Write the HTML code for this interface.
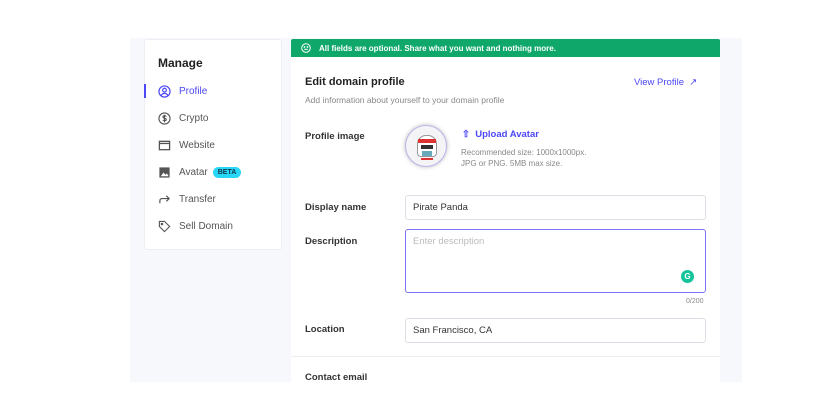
<!DOCTYPE html>
<html><head><style>
*{margin:0;padding:0;box-sizing:border-box}
body{width:827px;height:420px;background:#fff;font-family:"Liberation Sans",sans-serif;position:relative;overflow:hidden;color:#222}
.bg{position:absolute;left:130px;top:38px;width:612px;height:344px;background:#f7f8fc}
.side{position:absolute;left:144px;top:39px;width:138px;height:211px;background:#fff;border:1px solid #eceef3;border-radius:3px}
.side h3{position:absolute;left:13px;top:15px;font-size:12px;font-weight:bold;color:#222}
.item{position:absolute;left:13px;font-size:10px;color:#555;display:flex;align-items:center}
.item svg{width:13px;height:13px;margin-right:8px}
.act{color:#4c47f7}
.bar{position:absolute;left:-1px;top:44px;width:2px;height:14px;background:#4c47f7}
.beta{background:#28d7f5;color:#12374a;font-size:7px;font-weight:bold;border-radius:7px;padding:2px 5px;margin-left:5px}
.banner{position:absolute;left:291px;top:39px;width:429px;height:18px;background:#0fa86a;color:#fff;font-size:8px;font-weight:bold;display:flex;align-items:center;padding-left:10px;border-radius:2px 2px 0 0}
.main{position:absolute;left:291px;top:57px;width:429px;height:325px;background:#fff}
.t{position:absolute;font-size:10px}
.lbl{position:absolute;left:14px;font-size:9.5px;font-weight:bold;color:#333}
.inp{position:absolute;left:114px;width:301px;border:1px solid #dcdfe5;border-radius:3px;font-size:9.5px;color:#333;padding-left:7px;display:flex;align-items:center}
</style></head><body>
<div class="bg"></div>
<div class="side">
<h3 style="top:16px">Manage</h3>
<div class="bar"></div>
<div class="item act" style="top:45px"><svg viewBox="0 0 14 14" fill="none" stroke="#4c47f7" stroke-width="1.3"><circle cx="7" cy="7" r="6"/><circle cx="7" cy="5.5" r="2"/><path d="M3.3 11.3c1-1.6 2.2-2.3 3.7-2.3s2.7.7 3.7 2.3"/></svg>Profile</div>
<div class="item" style="top:72px"><svg viewBox="0 0 14 14" fill="none" stroke="#555" stroke-width="1.2"><circle cx="7" cy="7" r="6"/><path d="M8.8 5c-.4-.7-1-1-1.8-1-1 0-1.7.5-1.7 1.3 0 1.8 3.6.9 3.6 2.8 0 .8-.8 1.4-1.9 1.4-.8 0-1.5-.4-1.8-1M7 3v8"/></svg>Crypto</div>
<div class="item" style="top:99px"><svg viewBox="0 0 14 14" fill="none" stroke="#555" stroke-width="1.4"><rect x="1.5" y="2.5" width="11" height="9"/><path d="M1.5 4.8h11"/></svg>Website</div>
<div class="item" style="top:126px"><svg viewBox="0 0 14 14"><rect x="1.5" y="1.5" width="11" height="11" fill="#555"/><path d="M3 11l3-4 2 2.5 1.5-1.5 2 3z" fill="#fff"/></svg>Avatar<span class="beta">BETA</span></div>
<div class="item" style="top:153px"><svg viewBox="0 0 14 14" fill="none" stroke="#555" stroke-width="1.3"><path d="M2 11V8.5c0-1.5 1-2.5 2.5-2.5H12M9 3l3 3-3 3"/></svg>Transfer</div>
<div class="item" style="top:180px"><svg viewBox="0 0 14 14" fill="none" stroke="#555" stroke-width="1.2"><path d="M1.5 1.5h5.5l5.5 5.5-5.5 5.5-5.5-5.5z"/><circle cx="4.3" cy="4.3" r=".8"/></svg>Sell Domain</div>
</div>
<div class="banner"><svg width="10" height="10" viewBox="0 0 10 10" fill="none" stroke="#fff" stroke-width="1" style="margin-right:8px"><circle cx="5" cy="5" r="4.3"/><path d="M3.2 6.3h3.6"/><circle cx="3.5" cy="4" r=".4" fill="#fff"/><circle cx="6.5" cy="4" r=".4" fill="#fff"/></svg>All fields are optional. Share what you want and nothing more.</div>
<div class="main">
<div class="t" style="left:14px;top:19px;font-size:11px;font-weight:bold;color:#222">Edit domain profile</div>
<div class="t" style="left:343px;top:20px;color:#4c47f7;font-size:9.5px">View Profile &nbsp;↗</div>
<div class="t" style="left:14px;top:38px;font-size:8.5px;color:#888">Add information about yourself to your domain profile</div>
<div class="lbl" style="top:74px">Profile image</div>
<div style="position:absolute;left:114px;top:68px;width:42px;height:42px;border-radius:50%;background:#f4f4f6;box-shadow:0 0 4px #bbb;border:1px solid #b9b6e8;overflow:hidden"><div style="position:absolute;left:11px;top:9px;width:20px;height:22px;border-radius:9px 9px 4px 4px;background:#fff;border:1px solid #999"><div style="height:4px;background:#d33;margin-top:3px"></div><div style="height:4px;background:#333;margin:2px 3px"></div><div style="height:5px;background:#6ab;margin:2px 4px"></div><div style="height:2px;background:#d33;margin:0 3px"></div></div></div>
<div class="t" style="left:171px;top:72px;color:#4c47f7;font-size:9.5px;font-weight:bold">⇧ &nbsp;Upload Avatar</div>
<div class="t" style="left:170px;top:90px;font-size:8px;color:#888;line-height:11px">Recommended size: 1000x1000px.<br>JPG or PNG. 5MB max size.</div>
<div class="lbl" style="top:145px">Display name</div>
<div class="inp" style="top:138px;height:25px">Pirate Panda</div>
<div class="lbl" style="top:179px">Description</div>
<div class="inp" style="top:172px;height:64px;border-color:#7a76f5;align-items:flex-start;padding-top:6px;color:#bbb">Enter description<div style="position:absolute;right:11px;bottom:9px;width:13px;height:13px;border-radius:50%;background:#15c39a;color:#fff;font-size:8px;font-weight:bold;text-align:center;line-height:13px">G</div></div>
<div class="t" style="left:395px;top:241px;font-size:7px;color:#888">0/200</div>
<div class="lbl" style="top:267px">Location</div>
<div class="inp" style="top:261px;height:25px">San Francisco, CA</div>
<div style="position:absolute;left:0;top:299px;width:429px;height:1px;background:#eceef2"></div>
<div class="lbl" style="top:315px">Contact email</div>
</div>
</body></html>
